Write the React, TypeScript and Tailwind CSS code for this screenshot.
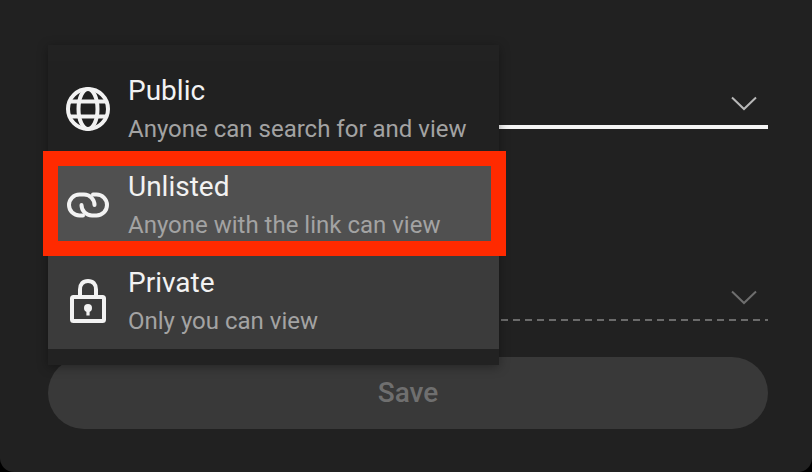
const font = "font-['Roboto',sans-serif]";

function Chevron({ className }: { className: string }) {
  return (
    <svg width="26" height="15" viewBox="0 0 26 15" fill="none" className={className}>
      <path d="M1 1.5L13 13L25 1.5" stroke="currentColor" strokeWidth="2" />
    </svg>
  );
}

function GlobeIcon() {
  return (
    <svg width="44" height="44" viewBox="0 0 44 44" fill="none" stroke="#f2f2f2" strokeWidth="4">
      <circle cx="22" cy="22" r="20" />
      <ellipse cx="22" cy="22" rx="9.5" ry="20" />
      <path d="M4 14.5H40M4 29.5H40" />
    </svg>
  );
}

function LinkIcon() {
  return (
    <svg width="44" height="44" viewBox="0 0 44 44" fill="none" stroke="#f2f2f2" strokeWidth="4" strokeLinecap="round">
      <path d="M17 32.5H13.5A10.5 10.5 0 0 1 13.5 11.5H18A10.5 10.5 0 0 1 28.5 22" />
      <path d="M27 11.5H30.5A10.5 10.5 0 0 1 30.5 32.5H26A10.5 10.5 0 0 1 15.5 22" />
    </svg>
  );
}

function LockIcon() {
  return (
    <svg width="44" height="44" viewBox="0 0 44 44" fill="none">
      <rect x="6" y="18" width="32" height="24" rx="1.5" stroke="#f2f2f2" strokeWidth="4" />
      <path d="M14 17V10.5C14 5 17 2 22 2C27 2 30 5 30 10.5V17" stroke="#f2f2f2" strokeWidth="4" />
      <circle cx="22" cy="29" r="4" fill="#f2f2f2" />
      <rect x="20.4" y="29" width="3.2" height="7.5" fill="#f2f2f2" />
    </svg>
  );
}

const options = [
  { title: "Public", desc: "Anyone can search for and view", icon: <GlobeIcon />, bg: "bg-[#212121]" },
  { title: "Unlisted", desc: "Anyone with the link can view", icon: <LinkIcon />, bg: "bg-[#505050]" },
  { title: "Private", desc: "Only you can view", icon: <LockIcon />, bg: "bg-[#3b3b3b]" },
];

export default function App() {
  return (
    <div className={`${font} h-[472px] w-[812px] overflow-hidden bg-black`}>
      <div className="relative flex h-full flex-col rounded-b-[14px] bg-[#212121] pl-12 pr-11">
        {/* Fields behind the menu */}
        <div className="flex h-[129px] items-end justify-end border-b-4 border-[#f5f5f5] pb-[14px] pr-[11px]">
          <Chevron className="text-[#b8b8b8]" />
        </div>
        <div className="flex h-[190px] items-end justify-end pb-[14px] pr-[11px]">
          <Chevron className="text-[#6e6e6e]" />
        </div>
        <div className="h-[2px] bg-[repeating-linear-gradient(90deg,#6b6b6b_0,#6b6b6b_4px,transparent_4px,transparent_9px,#6b6b6b_9px,#6b6b6b_12px)]" />
        <button className="mt-[36px] flex h-[72px] items-center justify-center rounded-full bg-[#393939] text-[28px] font-medium text-[#6f6f6f]">
          Save
        </button>

        {/* Dropdown menu */}
        <div className="absolute left-12 top-[45px] w-[451px] bg-[#222222] py-4 shadow-[0_2px_10px_rgba(0,0,0,0.35)]">
          {options.map((o) => (
            <div key={o.title} className={`flex h-[96px] items-center gap-[18px] pl-[18px] ${o.bg}`}>
              {o.icon}
              <div className="flex flex-col pt-[2px]">
                <span className="text-[28px] leading-[38px] text-[#f2f2f2]">{o.title}</span>
                <span className="text-[24px] leading-[38px] text-[#a3a3a3]">{o.desc}</span>
              </div>
            </div>
          ))}
        </div>

        {/* Red highlight around the selected row */}
        <div className="absolute left-[43px] top-[151px] h-[105px] w-[463px] border-[15px] border-[#ff2a00]" />
      </div>
    </div>
  );
}
